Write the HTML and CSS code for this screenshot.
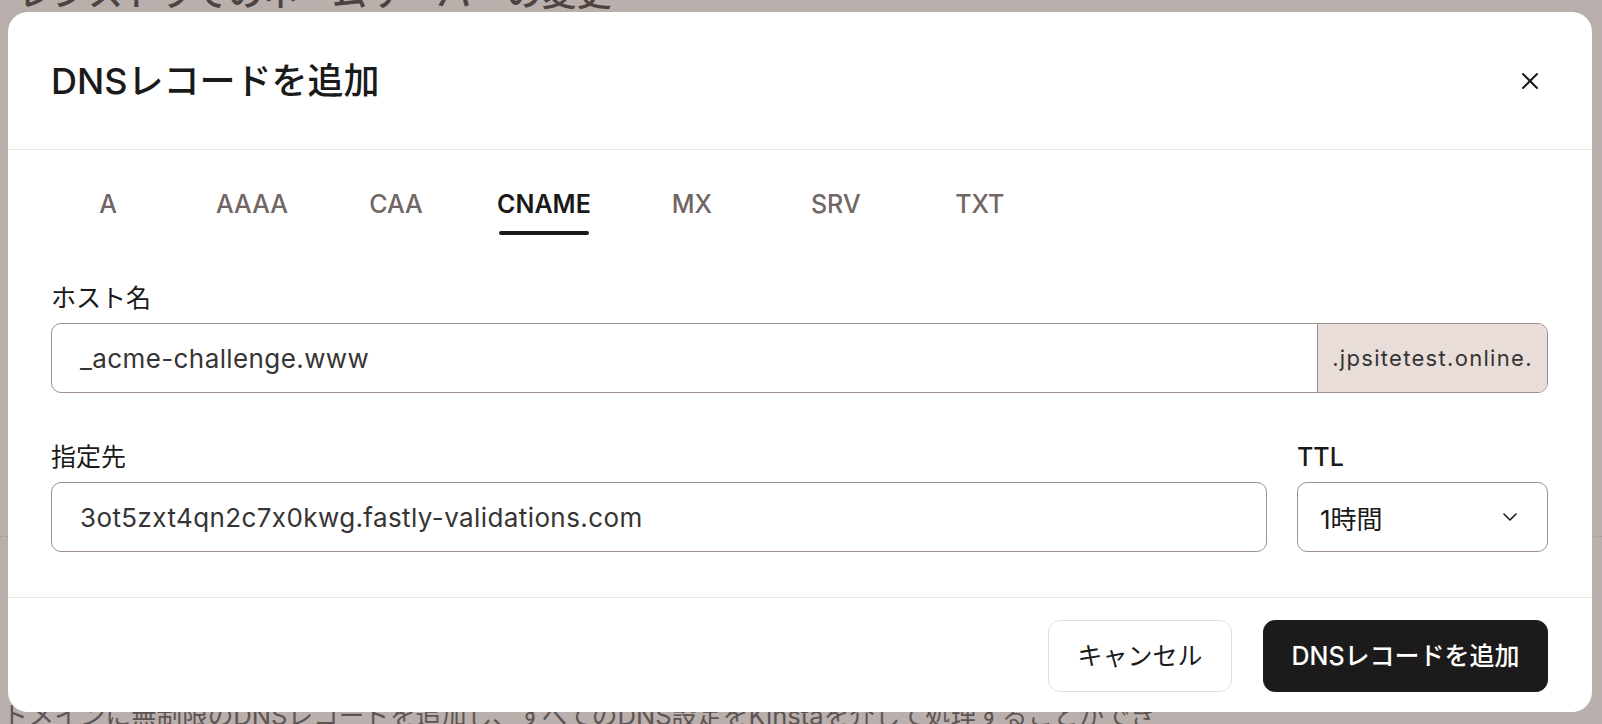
FILE: index.html
```html
<!DOCTYPE html>
<html lang="ja">
<head>
<meta charset="utf-8">
<title>DNSレコードを追加</title>
<link rel="stylesheet" href="styles.css">
</head>
<body>
<div class="page">
  <h2 class="page-heading">レジストラでのネームサーバーの変更</h2>
  <div class="page-spacer"></div>
  <div class="page-row"></div>
  <p class="page-text">ドメインに無制限のDNSレコードを追加し、すべてのDNS設定をKinstaを介して処理することができます。</p>
</div>

<div class="overlay">
  <div class="modal">
    <div class="modal-header">
      <h1 class="modal-title">DNSレコードを追加</h1>
      <button class="close-btn" aria-label="閉じる">
        <svg width="18" height="18" viewBox="0 0 18 18"><path d="M2 2 L16 16 M16 2 L2 16" stroke="#1a1a1a" stroke-width="2" stroke-linecap="round" fill="none"/></svg>
      </button>
    </div>

    <div class="modal-body">
      <div class="tabs">
        <div class="tab"><span class="tab-label">A</span></div>
        <div class="tab"><span class="tab-label">AAAA</span></div>
        <div class="tab"><span class="tab-label">CAA</span></div>
        <div class="tab active"><span class="tab-label">CNAME</span></div>
        <div class="tab"><span class="tab-label">MX</span></div>
        <div class="tab"><span class="tab-label">SRV</span></div>
        <div class="tab"><span class="tab-label">TXT</span></div>
      </div>

      <div class="field host-field">
        <label class="field-label">ホスト名</label>
        <div class="input-group">
          <div class="input-value">_acme-challenge.www</div>
          <div class="input-suffix">.jpsitetest.online.</div>
        </div>
      </div>

      <div class="field-row">
        <div class="field">
          <label class="field-label">指定先</label>
          <div class="input">
            <div class="input-value">3ot5zxt4qn2c7x0kwg.fastly-validations.com</div>
          </div>
        </div>
        <div class="field">
          <label class="field-label ttl-label">TTL</label>
          <div class="select">
            <span class="select-value">1時間</span>
            <svg width="14" height="8" viewBox="0 0 14 8"><path d="M1 1 L7 7 L13 1" stroke="#1a1a1a" stroke-width="1.6" stroke-linecap="round" stroke-linejoin="round" fill="none"/></svg>
          </div>
        </div>
      </div>
    </div>

    <div class="modal-footer">
      <button class="btn btn-secondary">キャンセル</button>
      <button class="btn btn-primary">DNSレコードを追加</button>
    </div>
  </div>
</div>
</body>
</html>
```

FILE: styles.css
```css
* {
  box-sizing: border-box;
}

html, body {
  margin: 0;
  padding: 0;
}

body {
  width: 1602px;
  height: 724px;
  overflow: hidden;
  background: #b9afac;
  font-family: Inter, "Noto Sans CJK JP", sans-serif;
  color: #1a1a1a;
  position: relative;
}

/* background page (under overlay) */
.page {
  height: 724px;
  overflow: hidden;
  display: flex;
  flex-direction: column;
  color: #574c4a;
}

.page-heading {
  margin: -32px 0 0 18px;
  font-size: 35px;
  font-weight: 500;
  line-height: 50px;
  color: #4d4442;
  white-space: nowrap;
}

.page-spacer {
  height: 518px;
  flex: none;
}

.page-row {
  height: 44px;
  flex: none;
  border-top: 1px dashed #a69c99;
  border-bottom: 1px solid #c2aaa6;
}

.page-text {
  width: 1165px;
  margin: 118px 0 0 3px;
  font-size: 25.6px;
  line-height: 36px;
  color: #5e5452;
}

/* overlay + modal */
.overlay {
  position: absolute;
  inset: 0;
  padding: 12px 10px 12px 8px;
  display: flex;
}

.modal {
  flex: 1;
  background: #ffffff;
  border-radius: 20px;
  display: flex;
  flex-direction: column;
  overflow: hidden;
}

.modal-header {
  height: 138px;
  flex: none;
  display: flex;
  align-items: center;
  justify-content: space-between;
  padding: 0 53px 0 43px;
  border-bottom: 1px solid #ede3de;
}

.modal-title {
  margin: 0;
  font-size: 36px;
  font-weight: 500;
  line-height: 42px;
  color: #1a1a1a;
}

.close-btn {
  border: 0;
  background: none;
  padding: 0;
  width: 18px;
  height: 18px;
  display: flex;
  cursor: pointer;
}

.modal-body {
  flex: 1;
  padding: 39px 44px 0 43px;
  display: flex;
  flex-direction: column;
}

.tabs {
  display: flex;
  gap: 30px;
}

.tab {
  min-width: 114px;
  padding: 0 14px;
  display: flex;
  justify-content: center;
  font-size: 25px;
  font-weight: 500;
  line-height: 30px;
  color: #716664;
}

.tab-label {
  display: inline-flex;
  flex-direction: column;
  align-items: stretch;
  white-space: nowrap;
}

.tab-label::after {
  content: "";
  display: block;
  height: 4px;
  margin: 12px 2px 0;
  border-radius: 2px;
  background: transparent;
}

.tab.active {
  color: #1a1a1a;
  font-weight: 600;
}

.tab.active .tab-label::after {
  background: #1a1a1a;
}

.field {
  display: flex;
  flex-direction: column;
  gap: 10px;
  min-width: 0;
}

.host-field {
  margin-top: 48px;
}

.field-label {
  font-size: 25px;
  font-weight: 400;
  line-height: 30px;
  color: #1a1a1a;
}

.ttl-label {
  font-weight: 500;
}

.input-group {
  display: flex;
  height: 70px;
  border: 1px solid #9e8f8b;
  border-radius: 10px;
  overflow: hidden;
}

.input-group .input-value {
  flex: 1;
  padding-left: 28px;
}

.input-value {
  display: flex;
  align-items: center;
  font-size: 26px;
  letter-spacing: 0.4px;
  color: #363434;
  white-space: nowrap;
}

.input-suffix {
  width: 230px;
  flex: none;
  display: flex;
  align-items: center;
  justify-content: center;
  background: #e8ddd8;
  border-left: 1px solid #9e8f8b;
  font-size: 22px;
  letter-spacing: 1.3px;
  color: #353333;
  white-space: nowrap;
}

.field-row {
  margin-top: 49px;
  display: grid;
  grid-template-columns: 1fr 251px;
  gap: 30px;
}

.input {
  height: 70px;
  border: 1px solid #9e8f8b;
  border-radius: 10px;
  display: flex;
  padding-left: 28px;
}

.select {
  height: 70px;
  border: 1px solid #9e8f8b;
  border-radius: 10px;
  display: flex;
  align-items: center;
  justify-content: space-between;
  padding: 0 30px 0 22px;
}

.select-value {
  font-size: 26px;
  color: #1a1a1a;
}

.modal-footer {
  flex: none;
  border-top: 1px solid #ede3de;
  padding: 22px 44px 20px 0;
  display: flex;
  justify-content: flex-end;
  gap: 31px;
}

.btn {
  height: 72px;
  border-radius: 12px;
  font-family: Inter, "Noto Sans CJK JP", sans-serif;
  font-size: 25px;
  line-height: 30px;
  cursor: pointer;
}

.btn-secondary {
  width: 184px;
  background: #ffffff;
  border: 1px solid #e6dbd6;
  color: #1a1a1a;
  font-weight: 400;
}

.btn-primary {
  width: 285px;
  background: #1c1a1a;
  border: 1px solid #1c1a1a;
  color: #ffffff;
  font-weight: 500;
}
```
